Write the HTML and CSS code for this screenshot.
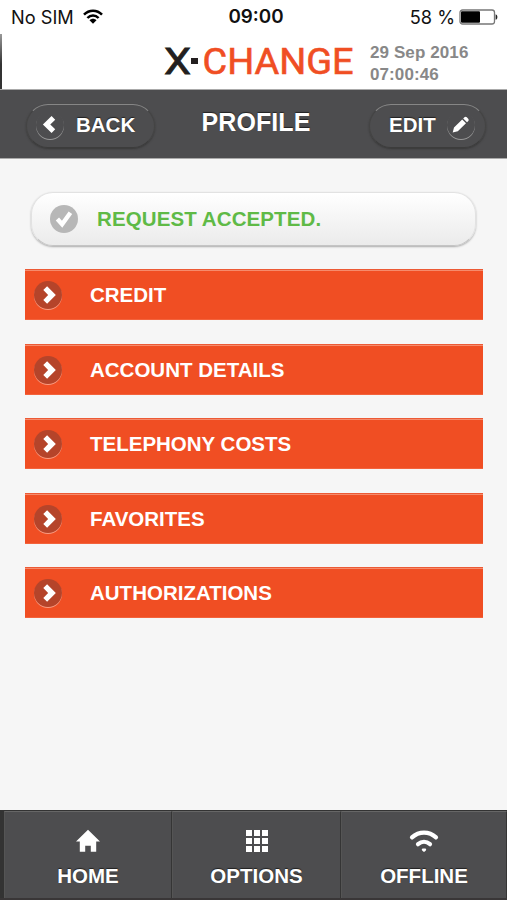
FILE: index.html
```html
<!DOCTYPE html>
<html lang="en">
<head>
    <meta charset="UTF-8">
    <meta name="viewport" content="width=device-width, initial-scale=1.0">
    <title>X-Change - Profile</title>
    <link rel="stylesheet" href="styles.css">
</head>
<body>
    <div class="app">
        <div class="status-bar">
            <div class="carrier">
                <span>No SIM</span>
                <svg width="20" height="16" viewBox="0 0 20 16" fill="none" stroke="#000" stroke-width="2.5">
                    <path d="M1 5.6C6 .4 14 .4 19 5.6M4.4 9c3.2-3.3 8-3.3 11.2 0"/>
                    <path d="M6.5 11.3c2-2 5-2 7 0L10 14.8z" fill="#000" stroke="none"/>
                </svg>
            </div>
            <span class="clock">09:00</span>
            <div class="power">
                <span>58 %</span>
                <svg width="39" height="16" viewBox="0 0 39 16">
                    <rect x="1" y="1" width="34.5" height="14" rx="2.5" fill="#fff" stroke="#777" stroke-width="1.3"/>
                    <rect x="2" y="2.2" width="19" height="11.6" rx="1" fill="#000"/>
                    <path d="M36.6 5.2c2.4.6 2.4 5 0 5.6z" fill="#222"/>
                </svg>
            </div>
        </div>

        <header class="brand">
            <svg class="logo" width="194" height="52" viewBox="-2 0 194 52">
                <text x="0" y="39" textLength="27" lengthAdjust="spacingAndGlyphs" class="logo-x">X</text>
                <rect x="27" y="23" width="7" height="6" fill="#231f20"/>
                <text x="38.5" y="39" textLength="151" lengthAdjust="spacingAndGlyphs" class="logo-name">CHANGE</text>
            </svg>
            <div class="date">29 Sep 2016<br>07:00:46</div>
        </header>

        <nav class="title-bar">
            <a class="nav-button back">
                <span class="nav-icon">
                    <svg width="28" height="28" viewBox="0 0 28 28"><path d="M17.4 6.8l-6.8 6.7 6.8 6.7" fill="none" stroke="#fff" stroke-width="5.2"/></svg>
                </span>
                BACK
            </a>
            <h1>PROFILE</h1>
            <a class="nav-button edit">
                EDIT
                <span class="nav-icon">
                    <svg width="28" height="28" viewBox="0 0 28 28" fill="#fff"><path d="M5.7 21.6l1.3-5.1 8.2-8.1 3.8 3.8-8.2 8.1zM16.2 7.4l1.2-1.2q1.2-1 2.4.1l1.4 1.4q1.1 1.2.1 2.3l-1.3 1.2z"/></svg>
                </span>
            </a>
        </nav>

        <main>
            <div class="notice">
                <svg width="28" height="28" viewBox="0 0 28 28">
                    <circle cx="14" cy="14" r="14" fill="#b7b7b7"/>
                    <path d="M7.4 14l4.7 5.2L20.4 7.8" fill="none" stroke="#fff" stroke-width="4.4"/>
                </svg>
                REQUEST ACCEPTED.
            </div>
            <ul class="menu">
                <li><span class="arrow"><svg width="28" height="28" viewBox="0 0 28 28"><path d="M11.2 7.2l6.8 6.8-6.8 6.8" fill="none" stroke="#fff" stroke-width="5.4"/></svg></span>CREDIT</li>
                <li><span class="arrow"><svg width="28" height="28" viewBox="0 0 28 28"><path d="M11.2 7.2l6.8 6.8-6.8 6.8" fill="none" stroke="#fff" stroke-width="5.4"/></svg></span>ACCOUNT DETAILS</li>
                <li><span class="arrow"><svg width="28" height="28" viewBox="0 0 28 28"><path d="M11.2 7.2l6.8 6.8-6.8 6.8" fill="none" stroke="#fff" stroke-width="5.4"/></svg></span>TELEPHONY COSTS</li>
                <li><span class="arrow"><svg width="28" height="28" viewBox="0 0 28 28"><path d="M11.2 7.2l6.8 6.8-6.8 6.8" fill="none" stroke="#fff" stroke-width="5.4"/></svg></span>FAVORITES</li>
                <li><span class="arrow"><svg width="28" height="28" viewBox="0 0 28 28"><path d="M11.2 7.2l6.8 6.8-6.8 6.8" fill="none" stroke="#fff" stroke-width="5.4"/></svg></span>AUTHORIZATIONS</li>
            </ul>
        </main>

        <footer class="tabs">
            <a class="tab">
                <svg width="30" height="24" viewBox="0 0 30 24"><path d="M15 .8L27 12.4h-3.8v10.4h-5.4v-6h-5.6v6H6.8V12.4H3z" fill="#fff"/></svg>
                HOME
            </a>
            <a class="tab">
                <svg width="30" height="24" viewBox="0 0 30 24" fill="#fff"><path d="M4 1h6v6H4zM12 1h6v6h-6zM20 1h6v6h-6zM4 9h6v6H4zM12 9h6v6h-6zM20 9h6v6h-6zM4 17h6v6H4zM12 17h6v6h-6zM20 17h6v6h-6z"/></svg>
                OPTIONS
            </a>
            <a class="tab">
                <svg width="30" height="24" viewBox="0 0 30 24" fill="none" stroke="#fff" stroke-width="4.2" stroke-linecap="round"><path d="M3 8.4c7-6.4 17-6.4 24 0M9 15.2c3.6-3 8.4-3 12 0"/><path d="M14 20.6h2l-1 .9z" fill="#fff" stroke-width="2.4" stroke-linejoin="round"/></svg>
                OFFLINE
            </a>
        </footer>
    </div>
</body>
</html>
```
FILE: styles.css
```css
* {
    box-sizing: border-box;
    margin: 0;
    padding: 0;
}

body {
    font-family: "Liberation Sans", Arial, sans-serif;
    font-weight: bold;
    font-size: 20.5px;
    line-height: 24px;
    background: #f6f6f6;
}

svg {
    display: block;
    flex: none;
}

.app {
    display: flex;
    flex-direction: column;
    height: 900px;
    overflow: hidden;
}

.status-bar {
    display: grid;
    grid-template-columns: 1fr auto 1fr;
    align-items: center;
    height: 34px;
    padding: 0 9px 0 11px;
    background: #fff;
    color: #111;
    font-family: Inter, sans-serif;
    font-size: 18.2px;
    font-weight: normal;
}

.carrier,
.power {
    display: flex;
    align-items: center;
    gap: 9px;
}

.power {
    justify-content: flex-end;
    gap: 4px;
}

.clock {
    padding-left: 3px;
    font-size: 18.8px;
    font-weight: 600;
}

.brand {
    display: flex;
    height: 56px;
    padding-left: 162px;
    background: linear-gradient(to bottom, #999, #333 30px) left / 2px 100% no-repeat #fff;
    border-bottom: 1px solid #aaa;
}

.logo {
    margin: 1px 14px 0 0;
}

.logo text {
    font-family: Roboto, sans-serif;
    font-size: 36px;
    font-weight: normal;
}

.logo-x {
    fill: #231f20;
    stroke: #231f20;
    stroke-width: 0.8px;
}

.logo-name {
    fill: #f04e23;
    stroke: #f04e23;
    stroke-width: 0.6px;
}

.date {
    padding-top: 8px;
    color: #888;
    font-size: 17px;
    line-height: 22px;
    letter-spacing: 0.1px;
    white-space: nowrap;
}

.title-bar {
    display: flex;
    height: 69px;
    padding: 14px 0 0 26px;
    background: #4d4d4f;
    border-bottom: 1px solid #aaa;
    color: #fff;
    text-shadow: 0 -1px 1px #222;
}

.title-bar h1 {
    width: 214px;
    padding: 6px 12px 0 0;
    font-size: 25px;
    letter-spacing: 0.1px;
    text-align: center;
}

.nav-button {
    display: flex;
    align-items: center;
    width: 129px;
    height: 44px;
    padding-bottom: 2px;
    border: 1px solid #444;
    border-top-color: #868686;
    border-bottom-color: #3c3c3c;
    border-radius: 22px;
    box-shadow: 0 1px 2px #383838;
}

.back {
    padding-left: 9px;
    gap: 12px;
}

.edit {
    width: 117px;
    padding-left: 19px;
    gap: 11px;
}

.nav-icon {
    border-radius: 50%;
    box-shadow: 0 1px 0 #999;
}

.notice {
    display: flex;
    align-items: center;
    gap: 19px;
    width: 445px;
    height: 54px;
    margin: 33px 0 0 31px;
    padding-left: 18px;
    border: 1px solid #e2e2e2;
    border-bottom-color: #c4c4c4;
    border-radius: 22px;
    background: linear-gradient(#fff, #ebebeb);
    box-shadow: 0 1px 2px #aaa;
    color: #5fba46;
    letter-spacing: 0.1px;
}

.menu {
    display: flex;
    flex-direction: column;
    gap: 23.5px;
    margin: 23px 24px 0 25px;
    list-style: none;
}

.menu li {
    display: flex;
    align-items: center;
    gap: 28px;
    height: 51px;
    padding-left: 9px;
    border-top: 1px solid #ec5a35;
    background: #f04e23;
    box-shadow: inset 0 1px 0 #f68b6c, inset 0 -1px 0 #f3633c;
    color: #fff;
}

.arrow {
    border-radius: 50%;
    background: #b5442a;
    box-shadow: 0 1px 0 #f99b82;
}

.tabs {
    display: grid;
    grid-template-columns: 168px 169px 1fr;
    height: 90px;
    margin-top: auto;
    padding-left: 4px;
    border-top: 1px solid #333;
    border-bottom: 2px solid #393637;
    background: #333;
}

.tab {
    display: flex;
    flex-direction: column;
    align-items: center;
    gap: 11px;
    padding-top: 17px;
    border-left: 1px solid #555;
    border-right: 1px solid #353535;
    border-top: 1px solid #666;
    background: #4d4d4f;
    color: #fff;
    text-shadow: 0 -1px 1px #222;
}
```
